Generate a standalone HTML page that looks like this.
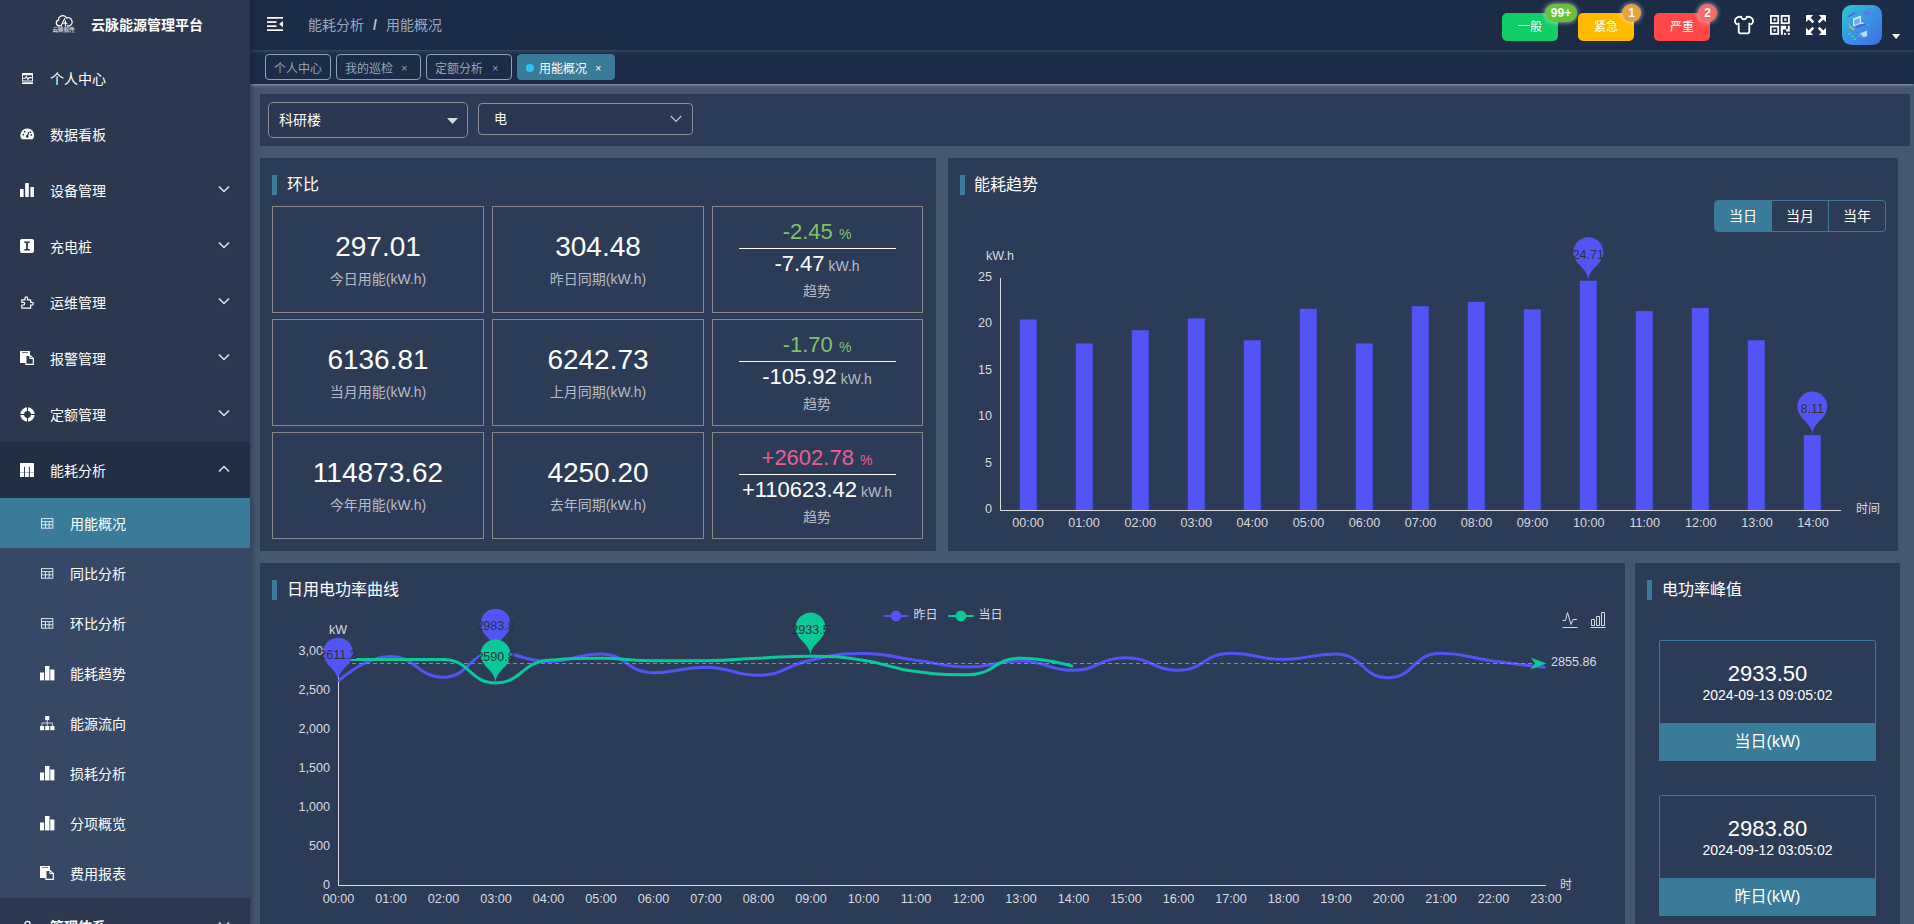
<!DOCTYPE html>
<html lang="zh-CN"><head><meta charset="utf-8"><title>云脉能源管理平台</title>
<style>
*{box-sizing:border-box;margin:0;padding:0}
html,body{width:1914px;height:924px;overflow:hidden;background:#47576f}
body{font-family:"Liberation Sans","Noto Sans CJK SC",sans-serif;color:#fff;font-size:14px;position:relative}
.a{position:absolute;white-space:nowrap}
.c{text-align:center}
.r{text-align:right}
svg{position:absolute;overflow:visible}
svg text{font-family:"Liberation Sans","Noto Sans CJK SC",sans-serif}
#side{left:0;top:0;width:250px;height:924px;background:#2b3850;overflow:hidden}
#sideshadow{left:0;top:0;width:250px;height:924px;box-shadow:2px 0 6px rgba(0,21,41,.35);z-index:5;pointer-events:none}
#head{left:250px;top:0;width:1664px;height:50px;background:#1c2c47}
#tabs{left:250px;top:50px;width:1664px;height:34px;background:#1c2c47;box-shadow:0 1px 3px rgba(255,255,255,.45)}
.panel{background:#2d3c56}
.mi{left:0;width:250px;height:56px}
.mi .t{left:50px;top:1px;height:56px;line-height:56px;font-size:14px;color:#fff}
.si{left:0;width:250px;height:50px}
.si .t{left:70px;top:1px;height:50px;line-height:50px;font-size:14px;color:#fff}
.tab{top:4px;height:26px;line-height:28px;border:1px solid #8aa5ad;border-radius:4px;font-size:12px;color:#8fa8b2;padding-left:8px}
.tab .x{position:absolute;right:12.500px;top:-1px;font-size:10.500px;color:#8fa8b2}
.card{border:1px solid #878787;width:212px;height:107px}
.big{font-size:28px;line-height:34px;color:#fff}
.lab{font-size:14px;line-height:20px;color:#b6bbc3}
.ptitle{font-size:16px;line-height:22px;color:#fff}
.pbar{width:5px;height:20px;background:#397b98}
</style></head><body>

<div id="sideshadow" class="a"></div>
<div id="side" class="a" style="z-index:6">
<svg style="left:52px;top:15px" width="24" height="19" viewBox="0 0 24 19" fill="none" stroke="#fff" stroke-linecap="round" stroke-linejoin="round">
<path d="M9.600 10.900H7.200a2.900 2.900 0 0 1-.7-5.700A4.300 4.300 0 0 1 14.600 3a3.400 3.400 0 0 1 2.700 7.900H15.200" stroke-width="1.300"/>
<path d="M9.300 10.300l3.400-6.800M13.400 5.600v5.300M11.700 8.700l1.700-1.500 1.600 1.500" stroke-width="1.100"/>
<text x="0.500" y="15.800" font-size="4.800" font-weight="bold" fill="#fff" stroke="none" textLength="22.500" lengthAdjust="spacingAndGlyphs" opacity=".8">云脉软件</text>
<text x="0.500" y="18" font-size="1.800" fill="#fff" stroke="none" textLength="22.500" lengthAdjust="spacingAndGlyphs" opacity=".45">YUNMAI SOFTWARE</text>
</svg>
<div class="a" style="left:91px;top:14px;height:22px;line-height:22px;font-size:14px;font-weight:bold;color:#fff">云脉能源管理平台</div>
<div class="a mi" style="top:50px"><svg style="left:21.500px;top:22.500px" width="11" height="11" viewBox="0 0 11 11"><rect x="0" y="0" width="11" height="8.600" rx=".600" fill="#fff"/><rect x=".900" y="2.300" width="9.200" height="5.200" fill="#2b3850"/><path d="M.900 5.200h2.300l1.100-1.700 1.600 3 1.200-1.900h3" stroke="#fff" stroke-width="1.100" fill="none"/><rect x="0" y="9.300" width="11" height="1.700" fill="#fff"/></svg><div class="a t">个人中心</div></div>
<div class="a mi" style="top:106px"><svg style="left:19.700px;top:22px" width="14.500" height="12.500" viewBox="0 0 15 13"><path d="M7.500 0.500a7 7 0 0 0-5.600 11.300h11.200A7 7 0 0 0 7.500 0.500z" fill="#fff"/><circle cx="7.500" cy="8.800" r="1.400" fill="#2b3850"/><path d="M7.500 8.800l1.600-4.600" stroke="#2b3850" stroke-width="1.200"/><circle cx="3.400" cy="7" r=".9" fill="#2b3850"/><circle cx="4.800" cy="3.800" r=".9" fill="#2b3850"/><circle cx="10.800" cy="4.200" r=".9" fill="#2b3850"/><circle cx="11.700" cy="7.200" r=".9" fill="#2b3850"/></svg><div class="a t">数据看板</div></div>
<div class="a mi" style="top:162px"><svg style="left:20px;top:21px" width="15" height="14" viewBox="0 0 15 14" fill="#fff"><rect x="0" y="6" width="3.600" height="8"/><rect x="5.200" y="0" width="3.600" height="14"/><rect x="10.400" y="4" width="3.600" height="10"/></svg><div class="a t">设备管理</div><svg style="left:218px;top:23px" width="12" height="8" viewBox="0 0 12 8" fill="none" stroke="#e8ebf0" stroke-width="1.400"><path d="M1 1.500l5 5 5-5"/></svg></div>
<div class="a mi" style="top:218px"><svg style="left:20px;top:21px" width="14" height="14" viewBox="0 0 14 14"><rect x="0" y="0" width="14" height="14" rx="2" fill="#fff"/><path d="M4.300 2.600h5.400v1.400H7.900v6h1.800v1.400H4.300V10h1.800V4H4.300z" fill="#2b3850"/></svg><div class="a t">充电桩</div><svg style="left:218px;top:23px" width="12" height="8" viewBox="0 0 12 8" fill="none" stroke="#e8ebf0" stroke-width="1.400"><path d="M1 1.500l5 5 5-5"/></svg></div>
<div class="a mi" style="top:274px"><svg style="left:20.500px;top:21.500px" width="13" height="13" viewBox="0 0 13 13" fill="none" stroke="#fff" stroke-width="1.200" stroke-linejoin="round"><path d="M.800 3.800H4V2.100a1.300 1.300 0 0 1 2.600 0V3.800H9.600V6.300h1.300a1.350 1.350 0 0 1 0 2.700H9.600v3.200H.800V9h1.500a1.350 1.350 0 0 0 0-2.700H.800z"/></svg><div class="a t">运维管理</div><svg style="left:218px;top:23px" width="12" height="8" viewBox="0 0 12 8" fill="none" stroke="#e8ebf0" stroke-width="1.400"><path d="M1 1.500l5 5 5-5"/></svg></div>
<div class="a mi" style="top:330px"><svg style="left:20px;top:21px" width="14" height="14" viewBox="0 0 14 14"><rect x="0" y="0" width="10" height="12" fill="#fff"/><rect x="2" y="1.200" width="6" height=".700" fill="#2b3850"/><path d="M5.900 4.400H9.800L13.300 7.600V13.300H5.900Z" fill="#2b3850" stroke="#fff" stroke-width="1.200"/><path d="M9.800 4.400V7.600H13.300" fill="none" stroke="#fff" stroke-width="1"/></svg><div class="a t">报警管理</div><svg style="left:218px;top:23px" width="12" height="8" viewBox="0 0 12 8" fill="none" stroke="#e8ebf0" stroke-width="1.400"><path d="M1 1.500l5 5 5-5"/></svg></div>
<div class="a mi" style="top:386px"><svg style="left:19.500px;top:20.500px" width="15" height="15" viewBox="0 0 15 15"><circle cx="7.500" cy="7.500" r="5.300" fill="none" stroke="#fff" stroke-width="3.800"/><path d="M7.500 0v15M0 7.500h15" stroke="#2b3850" stroke-width="1.100"/></svg><div class="a t">定额管理</div><svg style="left:218px;top:23px" width="12" height="8" viewBox="0 0 12 8" fill="none" stroke="#e8ebf0" stroke-width="1.400"><path d="M1 1.500l5 5 5-5"/></svg></div>
<div class="a mi" style="top:442px;background:#222e44"><svg style="left:20px;top:21px" width="14" height="14" viewBox="0 0 14 14"><rect width="14" height="14" fill="#fff"/><path d="M4.500 3.800V14M9.400 3.800V14" stroke="#222e44" stroke-width=".900"/><path d="M0 9.400h14" stroke="#222e44" stroke-width=".800" opacity=".45"/></svg><div class="a t">能耗分析</div><svg style="left:218px;top:23px" width="12" height="8" viewBox="0 0 12 8" fill="none" stroke="#e8ebf0" stroke-width="1.400"><path d="M1 6.500l5-5 5 5"/></svg></div>
<div class="a si" style="top:498px;background:#397b98"><svg style="left:41px;top:20px" width="12.400" height="10.800" viewBox="0 0 14 12" fill="none" stroke="#e6e9ee" stroke-width="1.100"><rect x=".600" y=".600" width="12.800" height="10.800"/><path d="M.600 4h12.800M.600 7.600h12.800M5 4v7.400M9.200 4v7.400"/></svg><div class="a t">用能概况</div></div>
<div class="a si" style="top:548px;background:#364865"><svg style="left:41px;top:20px" width="12.400" height="10.800" viewBox="0 0 14 12" fill="none" stroke="#e6e9ee" stroke-width="1.100"><rect x=".600" y=".600" width="12.800" height="10.800"/><path d="M.600 4h12.800M.600 7.600h12.800M5 4v7.400M9.200 4v7.400"/></svg><div class="a t">同比分析</div></div>
<div class="a si" style="top:598px;background:#364865"><svg style="left:41px;top:20px" width="12.400" height="10.800" viewBox="0 0 14 12" fill="none" stroke="#e6e9ee" stroke-width="1.100"><rect x=".600" y=".600" width="12.800" height="10.800"/><path d="M.600 4h12.800M.600 7.600h12.800M5 4v7.400M9.200 4v7.400"/></svg><div class="a t">环比分析</div></div>
<div class="a si" style="top:648px;background:#364865"><svg style="left:40px;top:17.500px" width="14.400" height="14.400" viewBox="0 0 14.400 14.400" fill="#fff"><rect x="0" y="6.500" width="4.100" height="7.900"/><rect x="5" y="0" width="4.500" height="14.400"/><rect x="10.300" y="3.500" width="4.100" height="10.900"/></svg><div class="a t">能耗趋势</div></div>
<div class="a si" style="top:698px;background:#364865"><svg style="left:40px;top:18px" width="14.400" height="14.400" viewBox="0 0 14.400 14.400" fill="#fff"><rect x="5.200" y="0" width="4.100" height="4.100"/><rect x="0" y="10" width="4.100" height="4.200"/><rect x="5.200" y="10" width="4.100" height="4.200"/><rect x="10.300" y="10" width="4.100" height="4.200"/><path d="M7.250 4v6M2 10V7h10.400v3" fill="none" stroke="#c9d0da" stroke-width="1"/></svg><div class="a t">能源流向</div></div>
<div class="a si" style="top:748px;background:#364865"><svg style="left:40px;top:17.500px" width="14.400" height="14.400" viewBox="0 0 14.400 14.400" fill="#fff"><rect x="0" y="6.500" width="4.100" height="7.900"/><rect x="5" y="0" width="4.500" height="14.400"/><rect x="10.300" y="3.500" width="4.100" height="10.900"/></svg><div class="a t">损耗分析</div></div>
<div class="a si" style="top:798px;background:#364865"><svg style="left:40px;top:17.500px" width="14.400" height="14.400" viewBox="0 0 14.400 14.400" fill="#fff"><rect x="0" y="6.500" width="4.100" height="7.900"/><rect x="5" y="0" width="4.500" height="14.400"/><rect x="10.300" y="3.500" width="4.100" height="10.900"/></svg><div class="a t">分项概览</div></div>
<div class="a si" style="top:848px;background:#364865"><svg style="left:40px;top:18px" width="14" height="14" viewBox="0 0 14 14"><rect x="0" y="0" width="10" height="12" fill="#fff"/><rect x="2" y="1.200" width="6" height=".700" fill="#364865"/><path d="M5.900 4.400H9.800L13.300 7.600V13.300H5.900Z" fill="#364865" stroke="#fff" stroke-width="1.200"/><path d="M9.800 4.400V7.600H13.300" fill="none" stroke="#fff" stroke-width="1"/></svg><div class="a t">费用报表</div></div>
<div class="a mi" style="top:898px"><svg style="left:21px;top:22px" width="13" height="15" viewBox="0 0 13 15" fill="none" stroke="#fff" stroke-width="1.300"><circle cx="6.500" cy="4" r="2.600"/><path d="M1 14.500a5.500 5.500 0 0 1 11 0"/></svg><div class="a t" style="font-weight:bold">管理体系</div><svg style="left:218px;top:23px" width="12" height="8" viewBox="0 0 12 8" fill="none" stroke="#e8ebf0" stroke-width="1.400"><path d="M1 1.500l5 5 5-5"/></svg></div>
</div>
<div id="tabs" class="a">
<div class="a tab" style="left:15px;width:66px">个人中心</div>
<div class="a tab" style="left:86px;width:85px">我的巡检<span class="x">×</span></div>
<div class="a tab" style="left:176px;width:86px">定额分析<span class="x">×</span></div>
<div class="a tab" style="left:267px;width:98px;background:#397b98;border-color:#397b98;color:#fff;padding-left:21px"><span class="a" style="left:8px;top:9px;width:8px;height:8px;border-radius:50%;background:#2bc4f8"></span>用能概况<span class="x" style="color:#fff">×</span></div>
</div>
<div id="head" class="a" style="box-shadow:0 1px 4px rgba(255,255,255,.2)">
<svg style="left:17px;top:17px" width="16" height="14" viewBox="0 0 16 14" fill="#fff"><rect x="0" y="0" width="16" height="1.700"/><rect x="0" y="4.200" width="9.500" height="1.700"/><rect x="0" y="8.300" width="9.500" height="1.700"/><rect x="0" y="12.300" width="16" height="1.700"/><path d="M16 4v6.200l-4-3.100z"/></svg>
<div class="a" style="left:58px;top:14px;height:22px;line-height:23px;font-size:14px;color:#97a8be">能耗分析</div>
<div class="a" style="left:123px;top:14px;height:22px;line-height:23px;font-size:14px;font-weight:bold;color:#c0c4cc">/</div>
<div class="a" style="left:136px;top:14px;height:22px;line-height:23px;font-size:14px;color:#97a8be">用能概况</div>
<div class="a c" style="left:1252px;top:13px;width:56px;height:28px;line-height:28px;border-radius:5px;background:#13ce66;font-size:12px;color:#fff">一般</div>
<div class="a c" style="left:1295px;top:4px;width:32px;height:18px;line-height:18px;border-radius:9px;background:#67c23a;font-size:12px;font-weight:bold;color:#fff;box-shadow:0 0 5px rgba(255,255,255,.75)">99+</div>
<div class="a c" style="left:1328px;top:13px;width:56px;height:28px;line-height:28px;border-radius:5px;background:#ffba00;font-size:12px;color:#fff">紧急</div>
<div class="a c" style="left:1372px;top:4px;width:19px;height:18px;line-height:18px;border-radius:9px;background:#e6a23c;font-size:12px;font-weight:bold;color:#fff;box-shadow:0 0 5px rgba(255,255,255,.75)">1</div>
<div class="a c" style="left:1404px;top:13px;width:56px;height:28px;line-height:28px;border-radius:5px;background:#ff4949;font-size:12px;color:#fff">严重</div>
<div class="a c" style="left:1448px;top:4px;width:19px;height:18px;line-height:18px;border-radius:9px;background:#f56c6c;font-size:12px;font-weight:bold;color:#fff;box-shadow:0 0 5px rgba(255,255,255,.75)">2</div>
<svg style="left:1484px;top:15px" width="20" height="20" viewBox="0 0 20 20" fill="none" stroke="#fff" stroke-width="1.800" stroke-linejoin="round" stroke-linecap="round"><path d="M7.200 1.700C7.500 3.500 8.700 4.300 10 4.300S12.500 3.500 12.800 1.700C15.800 1.700 18.600 3.200 19 5.600C19.200 7.200 18.300 8.900 17 9.100C16.300 9.200 15.700 8.900 15.300 8.400V16.600a1.700 1.700 0 0 1-1.700 1.700H6.400A1.700 1.700 0 0 1 4.700 16.600V8.400C4.300 8.900 3.700 9.200 3 9.100C1.700 8.900.800 7.200 1 5.600C1.400 3.200 4.200 1.700 7.200 1.700z"/></svg>
<svg style="left:1520px;top:15px" width="20" height="20" viewBox="0 0 20 20" fill="none" stroke="#fff" stroke-width="1.800"><rect x=".900" y=".900" width="7.300" height="7.300"/><rect x="11.600" y=".900" width="7.300" height="7.300"/><rect x=".900" y="11.600" width="7.300" height="7.300"/><g fill="#fff" stroke="none"><rect x="3.500" y="3.500" width="2.200" height="2.200"/><rect x="14.200" y="3.500" width="2.200" height="2.200"/><rect x="3.500" y="14.200" width="2.200" height="2.200"/><path d="M10.800 10.800h5.300v3.400h1.700v-3.400h2v5.600h-3.700v-1.800h-3.200v5.200h-2.100z"/><rect x="14" y="17.900" width="1.900" height="1.900"/><rect x="17.800" y="17.900" width="1.900" height="1.900"/></g></svg>
<svg style="left:1556px;top:15px" width="20" height="20" viewBox="0 0 20 20" fill="#fff" stroke="#fff" stroke-width="2.600"><path d="M0 0h7.200L0 7.200zM20 0v7.200L12.800 0zM0 20v-7.200L7.200 20zM20 20h-7.200L20 12.800z" stroke="none"/><path d="M2.500 2.500l4.800 4.800M17.500 2.500l-4.800 4.800M2.500 17.500l4.800-4.800M17.500 17.500l-4.800-4.800"/></svg>
<svg style="left:1592px;top:5px" width="40" height="40" viewBox="0 0 40 40"><defs><linearGradient id="av" x1="0" y1="0" x2="1" y2="1"><stop offset="0" stop-color="#2ccbd0"/><stop offset=".5" stop-color="#3a93e2"/><stop offset="1" stop-color="#4169e8"/></linearGradient></defs><rect width="40" height="40" rx="9.500" fill="url(#av)"/><path d="M5 11.500l7.500-4.500 1.500 1-7.500 4.600z" fill="#5b5cf0"/><path d="M20.500 8l5-2.400 3.500 2.200-5 2.600z" fill="#5f74f2"/><path d="M11 13.500l8-3v8l-8 3z" fill="#dff3ff" opacity=".9"/><path d="M12.300 15l5.400-2v5l-5.400 2z" fill="#6aa9ee"/><path d="M13 22l9-3.500 2 1.300-9 3.700z" fill="#5458ea"/><path d="M19.500 17l2.500 1.200-2.500 1z" fill="#fff"/><path d="M6.800 21.500l1.300-.8 4.700 4-1.300.9z" fill="#f4b23c"/><path d="M18 28.500l7-3v5.500l-3 1.300z" fill="#d9f0ff" opacity=".85"/><path d="M16 29l5 3.500 5-2.500" stroke="#7fd6f3" stroke-width=".600" fill="none" opacity=".8"/><g fill="#49e0dc" opacity=".85"><circle cx="7.500" cy="29" r="1.100"/><circle cx="10.500" cy="31.500" r="1.100"/><circle cx="12.800" cy="34" r="1.100"/><circle cx="26.500" cy="20" r=".800"/><circle cx="7" cy="19" r=".700"/></g><path d="M6 24l20-9M12 34l16-8" stroke="#8fe3f5" stroke-width=".400" stroke-dasharray="1 1" opacity=".6"/></svg>
<svg style="left:1642px;top:34px" width="8" height="5" viewBox="0 0 8 5" fill="#fff"><path d="M0 0h8.200L4.100 5z"/></svg>
</div>
<div class="a panel" style="left:260px;top:94px;width:1650px;height:52px"></div>
<div class="a" style="left:268px;top:102px;width:200px;height:36px;border:1px solid #8b8e93;border-radius:5px;background:#2a3750"><div class="a" style="left:10px;top:0;height:34px;line-height:34px;font-size:14px">科研楼</div><svg style="left:178px;top:15px" width="11" height="6" viewBox="0 0 11 6" fill="#d4d7dc"><path d="M0 0h11L5.500 6z"/></svg></div>
<div class="a" style="left:478px;top:103px;width:215px;height:32px;border:1px solid #8b8e93;border-radius:4px;background:#2a3750"><div class="a" style="left:15px;top:0;height:30px;line-height:29px;font-size:13px">电</div><svg style="left:191px;top:11px" width="12" height="8" viewBox="0 0 12 8" fill="none" stroke="#c0c4cc" stroke-width="1.200"><path d="M.800 1l5.200 5.400L11.200 1"/></svg></div>
<div class="a panel" style="left:260px;top:158px;width:676px;height:393px"></div>
<div class="a pbar" style="left:272px;top:175px"></div><div class="a ptitle" style="left:287px;top:174px">环比</div>
<div class="a card" style="left:272px;top:206px"><div class="a c big" style="left:0;top:23px;width:210px">297.01</div><div class="a c lab" style="left:0;top:62px;width:210px">今日用能(kW.h)</div></div>
<div class="a card" style="left:492px;top:206px"><div class="a c big" style="left:0;top:23px;width:210px">304.48</div><div class="a c lab" style="left:0;top:62px;width:210px">昨日同期(kW.h)</div></div>
<div class="a card" style="left:712px;top:206px;width:211px">
<div class="a c" style="left:0;top:11px;width:208px;height:28px;line-height:28px;font-size:22px;color:#7fc463">-2.45 <span style="font-size:14px">%</span></div>
<div class="a" style="left:26px;top:41px;width:157px;height:1px;background:#fff"></div>
<div class="a c" style="left:0;top:43px;width:208px;height:28px;line-height:28px;font-size:22px;color:#fff">-7.47<span style="font-size:14px;color:#b4bcc8"> kW.h</span></div>
<div class="a c lab" style="left:0;top:74px;width:208px">趋势</div>
</div>
<div class="a card" style="left:272px;top:319px"><div class="a c big" style="left:0;top:23px;width:210px">6136.81</div><div class="a c lab" style="left:0;top:62px;width:210px">当月用能(kW.h)</div></div>
<div class="a card" style="left:492px;top:319px"><div class="a c big" style="left:0;top:23px;width:210px">6242.73</div><div class="a c lab" style="left:0;top:62px;width:210px">上月同期(kW.h)</div></div>
<div class="a card" style="left:712px;top:319px;width:211px">
<div class="a c" style="left:0;top:11px;width:208px;height:28px;line-height:28px;font-size:22px;color:#7fc463">-1.70 <span style="font-size:14px">%</span></div>
<div class="a" style="left:26px;top:41px;width:157px;height:1px;background:#fff"></div>
<div class="a c" style="left:0;top:43px;width:208px;height:28px;line-height:28px;font-size:22px;color:#fff">-105.92<span style="font-size:14px;color:#b4bcc8"> kW.h</span></div>
<div class="a c lab" style="left:0;top:74px;width:208px">趋势</div>
</div>
<div class="a card" style="left:272px;top:432px"><div class="a c big" style="left:0;top:23px;width:210px">114873.62</div><div class="a c lab" style="left:0;top:62px;width:210px">今年用能(kW.h)</div></div>
<div class="a card" style="left:492px;top:432px"><div class="a c big" style="left:0;top:23px;width:210px">4250.20</div><div class="a c lab" style="left:0;top:62px;width:210px">去年同期(kW.h)</div></div>
<div class="a card" style="left:712px;top:432px;width:211px">
<div class="a c" style="left:0;top:11px;width:208px;height:28px;line-height:28px;font-size:22px;color:#e85d9a">+2602.78 <span style="font-size:14px">%</span></div>
<div class="a" style="left:26px;top:41px;width:157px;height:1px;background:#fff"></div>
<div class="a c" style="left:0;top:43px;width:208px;height:28px;line-height:28px;font-size:22px;color:#fff">+110623.42<span style="font-size:14px;color:#b4bcc8"> kW.h</span></div>
<div class="a c lab" style="left:0;top:74px;width:208px">趋势</div>
</div>
<div class="a panel" style="left:948px;top:158px;width:950px;height:393px"></div>
<div class="a pbar" style="left:960px;top:175px"></div><div class="a ptitle" style="left:974px;top:174px">能耗趋势</div>
<div class="a" style="left:1714px;top:200px;width:172px;height:32px;border:1px solid #397b98;border-radius:4px;overflow:hidden;font-size:14px">
<div class="a c" style="left:0;top:0;width:56px;height:30px;line-height:30px;background:#397b98">当日</div>
<div class="a c" style="left:56px;top:0;width:57px;height:30px;line-height:30px;border-left:1px solid #397b98">当月</div>
<div class="a c" style="left:113px;top:0;width:57px;height:30px;line-height:30px;border-left:1px solid #397b98">当年</div>
</div>
<svg style="left:0;top:0" width="1914" height="924" viewBox="0 0 1914 924">
<path d="M1000.5 278V510.5 H1841" fill="none" stroke="#d8dbe0" stroke-width="1"/>
<text x="986" y="259.500" font-size="12.600" fill="#d8dbe0">kW.h</text>
<text x="992" y="513.4" text-anchor="end" font-size="12.600" fill="#d8dbe0">0</text>
<text x="992" y="466.9" text-anchor="end" font-size="12.600" fill="#d8dbe0">5</text>
<text x="992" y="420.4" text-anchor="end" font-size="12.600" fill="#d8dbe0">10</text>
<text x="992" y="373.9" text-anchor="end" font-size="12.600" fill="#d8dbe0">15</text>
<text x="992" y="327.4" text-anchor="end" font-size="12.600" fill="#d8dbe0">20</text>
<text x="992" y="280.9" text-anchor="end" font-size="12.600" fill="#d8dbe0">25</text>
<rect x="1019.8" y="319.5" width="17" height="190.5" fill="#5254f6"/>
<text x="1028.0" y="527" text-anchor="middle" font-size="12.600" fill="#d8dbe0">00:00</text>
<rect x="1075.8" y="343.4" width="17" height="166.6" fill="#5254f6"/>
<text x="1084.1" y="527" text-anchor="middle" font-size="12.600" fill="#d8dbe0">01:00</text>
<rect x="1131.8" y="330.2" width="17" height="179.8" fill="#5254f6"/>
<text x="1140.2" y="527" text-anchor="middle" font-size="12.600" fill="#d8dbe0">02:00</text>
<rect x="1187.8" y="318.4" width="17" height="191.6" fill="#5254f6"/>
<text x="1196.2" y="527" text-anchor="middle" font-size="12.600" fill="#d8dbe0">03:00</text>
<rect x="1243.8" y="340.3" width="17" height="169.7" fill="#5254f6"/>
<text x="1252.3" y="527" text-anchor="middle" font-size="12.600" fill="#d8dbe0">04:00</text>
<rect x="1299.8" y="308.8" width="17" height="201.2" fill="#5254f6"/>
<text x="1308.4" y="527" text-anchor="middle" font-size="12.600" fill="#d8dbe0">05:00</text>
<rect x="1355.8" y="343.4" width="17" height="166.6" fill="#5254f6"/>
<text x="1364.4" y="527" text-anchor="middle" font-size="12.600" fill="#d8dbe0">06:00</text>
<rect x="1411.8" y="306.2" width="17" height="203.8" fill="#5254f6"/>
<text x="1420.5" y="527" text-anchor="middle" font-size="12.600" fill="#d8dbe0">07:00</text>
<rect x="1467.8" y="301.9" width="17" height="208.1" fill="#5254f6"/>
<text x="1476.6" y="527" text-anchor="middle" font-size="12.600" fill="#d8dbe0">08:00</text>
<rect x="1523.8" y="309.4" width="17" height="200.6" fill="#5254f6"/>
<text x="1532.6" y="527" text-anchor="middle" font-size="12.600" fill="#d8dbe0">09:00</text>
<rect x="1579.8" y="280.7" width="17" height="229.3" fill="#5254f6"/>
<text x="1588.7" y="527" text-anchor="middle" font-size="12.600" fill="#d8dbe0">10:00</text>
<rect x="1635.8" y="311.1" width="17" height="198.9" fill="#5254f6"/>
<text x="1644.8" y="527" text-anchor="middle" font-size="12.600" fill="#d8dbe0">11:00</text>
<rect x="1691.8" y="307.9" width="17" height="202.1" fill="#5254f6"/>
<text x="1700.8" y="527" text-anchor="middle" font-size="12.600" fill="#d8dbe0">12:00</text>
<rect x="1747.8" y="340.3" width="17" height="169.7" fill="#5254f6"/>
<text x="1756.9" y="527" text-anchor="middle" font-size="12.600" fill="#d8dbe0">13:00</text>
<rect x="1803.8" y="435.1" width="17" height="74.9" fill="#5254f6"/>
<text x="1813.0" y="527" text-anchor="middle" font-size="12.600" fill="#d8dbe0">14:00</text>
<text x="1856" y="512.500" font-size="12" fill="#d8dbe0">时间</text>
<path d="M1574.75 258.55A15.00 15.00 0 1 1 1601.85 258.55C1598.00 266.69 1588.30 270.20 1588.30 280.70C1588.30 270.20 1578.60 266.69 1574.75 258.55Z" fill="#5254f6"/><text x="1588.3" y="258.6" text-anchor="middle" font-size="12.500" fill="#293140">24.71</text>
<path d="M1798.75 412.93A15.00 15.00 0 1 1 1825.85 412.93C1822.00 421.07 1812.30 424.58 1812.30 435.08C1812.30 424.58 1802.60 421.07 1798.75 412.93Z" fill="#5254f6"/><text x="1812.3" y="413.0" text-anchor="middle" font-size="12.500" fill="#293140">8.11</text>
</svg>
<div class="a panel" style="left:260px;top:563px;width:1365px;height:400px"></div>
<div class="a pbar" style="left:272px;top:580px"></div><div class="a ptitle" style="left:287px;top:579px">日用电功率曲线</div>
<svg style="left:0;top:0" width="1914" height="924" viewBox="0 0 1914 924">
<path d="M338.500 651V885.500H1546" fill="none" stroke="#d8dbe0" stroke-width="1"/>
<text x="338" y="634" text-anchor="middle" font-size="12.600" fill="#d8dbe0">kW</text>
<text x="330" y="889.2" text-anchor="end" font-size="12.600" fill="#d8dbe0">0</text>
<text x="330" y="850.2" text-anchor="end" font-size="12.600" fill="#d8dbe0">500</text>
<text x="330" y="811.2" text-anchor="end" font-size="12.600" fill="#d8dbe0">1,000</text>
<text x="330" y="772.2" text-anchor="end" font-size="12.600" fill="#d8dbe0">1,500</text>
<text x="330" y="733.2" text-anchor="end" font-size="12.600" fill="#d8dbe0">2,000</text>
<text x="330" y="694.2" text-anchor="end" font-size="12.600" fill="#d8dbe0">2,500</text>
<text x="330" y="655.2" text-anchor="end" font-size="12.600" fill="#d8dbe0">3,000</text>
<text x="338.5" y="902.500" text-anchor="middle" font-size="12.600" fill="#d8dbe0">00:00</text>
<text x="391.0" y="902.500" text-anchor="middle" font-size="12.600" fill="#d8dbe0">01:00</text>
<text x="443.5" y="902.500" text-anchor="middle" font-size="12.600" fill="#d8dbe0">02:00</text>
<text x="496.0" y="902.500" text-anchor="middle" font-size="12.600" fill="#d8dbe0">03:00</text>
<text x="548.5" y="902.500" text-anchor="middle" font-size="12.600" fill="#d8dbe0">04:00</text>
<text x="601.0" y="902.500" text-anchor="middle" font-size="12.600" fill="#d8dbe0">05:00</text>
<text x="653.5" y="902.500" text-anchor="middle" font-size="12.600" fill="#d8dbe0">06:00</text>
<text x="706.0" y="902.500" text-anchor="middle" font-size="12.600" fill="#d8dbe0">07:00</text>
<text x="758.5" y="902.500" text-anchor="middle" font-size="12.600" fill="#d8dbe0">08:00</text>
<text x="811.0" y="902.500" text-anchor="middle" font-size="12.600" fill="#d8dbe0">09:00</text>
<text x="863.5" y="902.500" text-anchor="middle" font-size="12.600" fill="#d8dbe0">10:00</text>
<text x="916.0" y="902.500" text-anchor="middle" font-size="12.600" fill="#d8dbe0">11:00</text>
<text x="968.5" y="902.500" text-anchor="middle" font-size="12.600" fill="#d8dbe0">12:00</text>
<text x="1021.0" y="902.500" text-anchor="middle" font-size="12.600" fill="#d8dbe0">13:00</text>
<text x="1073.5" y="902.500" text-anchor="middle" font-size="12.600" fill="#d8dbe0">14:00</text>
<text x="1126.0" y="902.500" text-anchor="middle" font-size="12.600" fill="#d8dbe0">15:00</text>
<text x="1178.5" y="902.500" text-anchor="middle" font-size="12.600" fill="#d8dbe0">16:00</text>
<text x="1231.0" y="902.500" text-anchor="middle" font-size="12.600" fill="#d8dbe0">17:00</text>
<text x="1283.5" y="902.500" text-anchor="middle" font-size="12.600" fill="#d8dbe0">18:00</text>
<text x="1336.0" y="902.500" text-anchor="middle" font-size="12.600" fill="#d8dbe0">19:00</text>
<text x="1388.5" y="902.500" text-anchor="middle" font-size="12.600" fill="#d8dbe0">20:00</text>
<text x="1441.0" y="902.500" text-anchor="middle" font-size="12.600" fill="#d8dbe0">21:00</text>
<text x="1493.5" y="902.500" text-anchor="middle" font-size="12.600" fill="#d8dbe0">22:00</text>
<text x="1546.0" y="902.500" text-anchor="middle" font-size="12.600" fill="#d8dbe0">23:00</text>
<text x="1560" y="888.500" font-size="12" fill="#d8dbe0">时</text>
<path d="M338.00 681.33C338.00 681.33 363.87 656.46 390.50 656.46C416.37 656.46 417.13 677.21 443.00 677.21C469.63 677.21 468.11 652.26 495.50 652.26C520.61 652.26 521.69 661.45 548.00 661.45C574.19 661.45 574.91 653.89 600.50 653.89C627.41 653.89 626.03 672.68 653.00 672.68C678.53 672.68 679.33 667.22 705.50 667.22C731.83 667.22 732.11 675.18 758.00 675.18C784.61 675.18 783.85 665.73 810.50 660.20C836.35 654.85 836.75 653.42 863.00 653.42C889.25 653.42 889.25 656.81 915.50 660.20C941.75 663.60 941.73 666.99 968.00 666.99C994.23 666.99 994.36 660.98 1020.50 660.98C1046.86 660.98 1046.91 670.19 1073.00 670.19C1099.41 670.19 1099.25 657.71 1125.50 657.71C1151.75 657.71 1152.04 670.19 1178.00 670.19C1204.54 670.19 1203.69 653.18 1230.50 653.18C1256.19 653.18 1256.73 659.42 1283.00 659.42C1309.23 659.42 1310.41 653.89 1335.50 653.89C1362.91 653.89 1361.82 677.75 1388.00 677.75C1414.32 677.75 1413.09 653.18 1440.50 653.18C1465.59 653.18 1466.70 657.43 1493.00 660.98C1519.20 664.53 1545.50 667.38 1545.50 667.38" fill="none" stroke="#5254f6" stroke-width="3" stroke-linejoin="round"/>
<path d="M338.00 659.42C338.00 659.42 364.25 659.42 390.50 659.42C416.75 659.42 417.95 659.42 443.00 659.42C470.45 659.42 469.16 682.92 495.50 682.92C521.66 682.92 520.65 662.74 548.00 660.36C573.15 658.18 574.25 658.18 600.50 658.18C626.75 658.18 626.73 660.75 653.00 660.75C679.23 660.75 679.27 660.75 705.50 660.75C731.77 660.75 731.74 659.32 758.00 658.18C784.24 657.04 784.28 656.19 810.50 656.19C836.78 656.19 837.01 656.41 863.00 660.20C889.51 664.07 888.98 668.25 915.50 671.51C941.48 674.71 942.35 674.71 968.00 674.71C994.85 674.71 993.79 658.18 1020.50 658.18C1046.29 658.18 1073.00 666.44 1073.00 666.44" fill="none" stroke="#08c997" stroke-width="3" stroke-linejoin="round"/>
<path d="M338 663.5H1536" stroke="#08c997" stroke-width="1" stroke-dasharray="4 3" fill="none"/>
<path d="M1546.500 663.5l-16-6 4.500 6-4.500 6z" fill="#08c997"/>
<text x="1551" y="666.0" font-size="12.600" fill="#d8dbe0">2855.86</text>
<path d="M324.45 659.18A15.00 15.00 0 1 1 351.55 659.18C347.70 667.32 338.00 670.83 338.00 681.33C338.00 670.83 328.30 667.32 324.45 659.18Z" fill="#5254f6"/><text x="338.0" y="659.2" text-anchor="middle" font-size="12.500" fill="#293140">2611.2</text>
<path d="M481.95 630.12A15.00 15.00 0 1 1 509.05 630.12C505.20 638.25 495.50 641.76 495.50 652.26C495.50 641.76 485.80 638.25 481.95 630.12Z" fill="#5254f6"/><text x="495.5" y="630.2" text-anchor="middle" font-size="12.500" fill="#293140">2983.8</text>
<path d="M481.95 660.77A15.00 15.00 0 1 1 509.05 660.77C505.20 668.91 495.50 672.42 495.50 682.92C495.50 672.42 485.80 668.91 481.95 660.77Z" fill="#08c997"/><text x="495.5" y="660.8" text-anchor="middle" font-size="12.500" fill="#293140">2590.8</text>
<path d="M796.95 634.04A15.00 15.00 0 1 1 824.05 634.04C820.20 642.18 810.50 645.69 810.50 656.19C810.50 645.69 800.80 642.18 796.95 634.04Z" fill="#08c997"/><text x="810.5" y="634.1" text-anchor="middle" font-size="12.500" fill="#293140">2933.5</text>
<path d="M883.300 616h25.400" stroke="#5254f6" stroke-width="2"/><circle cx="896" cy="616" r="5.400" fill="#5254f6"/>
<text x="913.500" y="619" font-size="12" fill="#d8dbe0">昨日</text>
<path d="M948.300 616h25.400" stroke="#08c997" stroke-width="2"/><circle cx="961" cy="616" r="5.400" fill="#08c997"/>
<text x="978.500" y="619" font-size="12" fill="#d8dbe0">当日</text>
<g fill="none" stroke="#d8dbe0" stroke-width="1" transform="translate(-1,0)"><path d="M1563.500 620.500h3l2-8 3.500 12 2-5h4M1563.500 627.500h15"/><path d="M1591.500 627.500h15M1592.500 625.500v-6h3v6zM1597.500 625.500v-9h3v9zM1602.500 625.500v-13h3v13z"/></g>
</svg>
<div class="a panel" style="left:1635px;top:563px;width:265px;height:400px"></div>
<div class="a pbar" style="left:1647px;top:580px"></div><div class="a ptitle" style="left:1662px;top:579px">电功率峰值</div>
<div class="a" style="left:1659px;top:640px;width:217px;height:121px;border:1px solid #397b98;border-radius:2px">
<div class="a c" style="left:0;top:19px;width:215px;height:28px;line-height:28px;font-size:22px">2933.50</div>
<div class="a c" style="left:0;top:44px;width:215px;height:20px;line-height:20px;font-size:14px">2024-09-13 09:05:02</div>
<div class="a c" style="left:-1px;top:82px;width:217px;height:38px;line-height:38px;font-size:16px;background:#397b98">当日(kW)</div>
</div>
<div class="a" style="left:1659px;top:795px;width:217px;height:121px;border:1px solid #397b98;border-radius:2px">
<div class="a c" style="left:0;top:19px;width:215px;height:28px;line-height:28px;font-size:22px">2983.80</div>
<div class="a c" style="left:0;top:44px;width:215px;height:20px;line-height:20px;font-size:14px">2024-09-12 03:05:02</div>
<div class="a c" style="left:-1px;top:82px;width:217px;height:38px;line-height:38px;font-size:16px;background:#397b98">昨日(kW)</div>
</div>
</body></html>
